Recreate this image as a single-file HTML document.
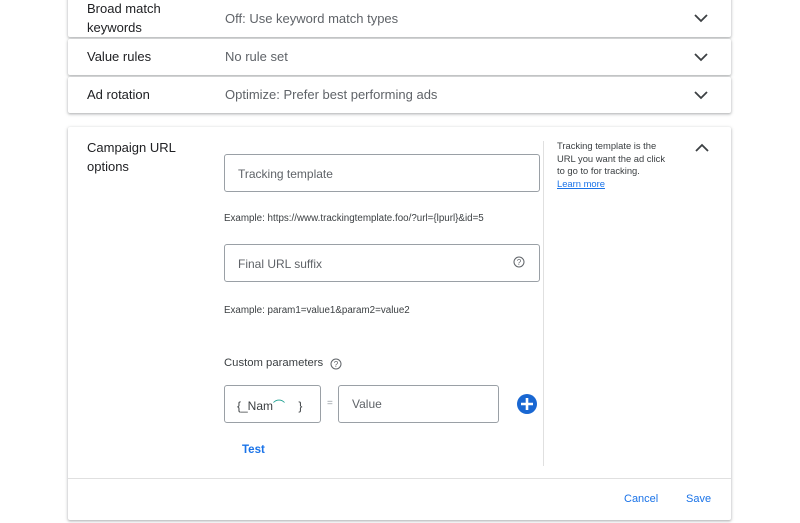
<!DOCTYPE html><html><head><style>
body{margin:0;width:800px;height:523px;background:#fff;font-family:"Liberation Sans",sans-serif;position:relative;overflow:hidden;color:#3c4043}
.a{position:absolute}
.card{position:absolute;left:68px;width:663px;background:#fff;box-shadow:0 1px 2px rgba(60,64,67,.3),0 1px 3px 1px rgba(60,64,67,.12);border-radius:2px}
.lbl{position:absolute;left:19px;font-size:13px;color:#202124;line-height:19px}
.val{position:absolute;left:157px;font-size:13px;color:#5f6368}
.chev{position:absolute;left:626px}
.inp{position:absolute;border:1px solid #9aa0a6;border-radius:3px;background:#fff;font-size:12px;color:#5f6368;box-sizing:border-box}
.ex{position:absolute;font-size:9.8px;color:#3c4043}
</style></head><body>
<div class="card" style="top:-4px;height:41px"><div class="lbl" style="top:3px">Broad match<br>keywords</div><div class="val" style="top:15px">Off: Use keyword match types</div><svg class="chev" style="top:17px" width="14" height="10"><path d="M1 2l6 6 6-6" stroke="#3c4043" stroke-width="1.8" fill="none"/></svg></div>
<div class="card" style="top:39px;height:36px"><div class="lbl" style="top:8px">Value rules</div><div class="val" style="top:10px">No rule set</div><svg class="chev" style="top:13px" width="14" height="10"><path d="M1 2l6 6 6-6" stroke="#3c4043" stroke-width="1.8" fill="none"/></svg></div>
<div class="card" style="top:77px;height:36px"><div class="lbl" style="top:8px">Ad rotation</div><div class="val" style="top:10px">Optimize: Prefer best performing ads</div><svg class="chev" style="top:13px" width="14" height="10"><path d="M1 2l6 6 6-6" stroke="#3c4043" stroke-width="1.8" fill="none"/></svg></div>
<div class="card" style="top:127px;height:393px">
<div class="lbl" style="top:11px">Campaign URL<br>options</div>
<div class="a" style="left:475px;top:14px;width:1px;height:325px;background:#e0e0e0"></div>
<div class="a" style="left:489px;top:13px;font-size:9.4px;line-height:12.5px;color:#3c4043">Tracking template is the<br>URL you want the ad click<br>to go to for tracking.<br><span style="color:#1a73e8;text-decoration:underline">Learn more</span></div>
<svg class="a" style="left:627px;top:16px" width="14" height="10"><path d="M1 8l6-6 6 6" stroke="#3c4043" stroke-width="1.8" fill="none"/></svg>
<div class="a" style="left:0;top:351px;width:663px;height:1px;background:#e0e0e0"></div>
<div class="a" style="left:556px;top:366px;font-size:11px;color:#1a73e8">Cancel</div>
<div class="a" style="left:618px;top:366px;font-size:11px;color:#1a73e8">Save</div>
</div>
<div class="inp" style="left:224px;top:154px;width:316px;height:38px;padding:12px 13px">Tracking template</div>
<div class="ex" style="left:224px;top:213px">Example: https://www.trackingtemplate.foo/?url={lpurl}&amp;id=5</div>
<div class="inp" style="left:224px;top:244px;width:316px;height:38px;padding:12px 13px">Final URL suffix</div>
<svg class="a" style="left:513px;top:256px" width="12" height="12"><circle cx="6" cy="6" r="5" stroke="#5f6368" fill="none"/><text x="6" y="9" font-size="8" text-anchor="middle" fill="#5f6368" font-family="Liberation Sans">?</text></svg>
<div class="ex" style="left:224px;top:305px">Example: param1=value1&amp;param2=value2</div>
<div class="a" style="left:224px;top:357px;font-size:11.3px;color:#3c4043">Custom parameters</div>
<svg class="a" style="left:330px;top:358px" width="12" height="12"><circle cx="6" cy="6" r="5" stroke="#5f6368" fill="none"/><text x="6" y="9" font-size="8" text-anchor="middle" fill="#5f6368" font-family="Liberation Sans">?</text></svg>
<div class="inp" style="left:224px;top:385px;width:97px;height:38px;padding:11px 12px;color:#3c4043">{_Nam<span style="color:#1a9e8f">⌒</span>&nbsp;&nbsp;&nbsp;&nbsp;}</div>
<div class="a" style="left:327px;top:398px;font-size:10px;color:#9aa0a6">=</div>
<div class="inp" style="left:338px;top:385px;width:161px;height:38px;padding:11px 13px">Value</div>
<svg class="a" style="left:516px;top:393px" width="22" height="22"><circle cx="11" cy="11" r="10" fill="#1967d2"/><path d="M11 5v12M5 11h12" stroke="#fff" stroke-width="2.6"/></svg>
<div class="a" style="left:242px;top:444px;font-size:11.5px;font-weight:bold;color:#1a73e8">Test</div>
</body></html>
